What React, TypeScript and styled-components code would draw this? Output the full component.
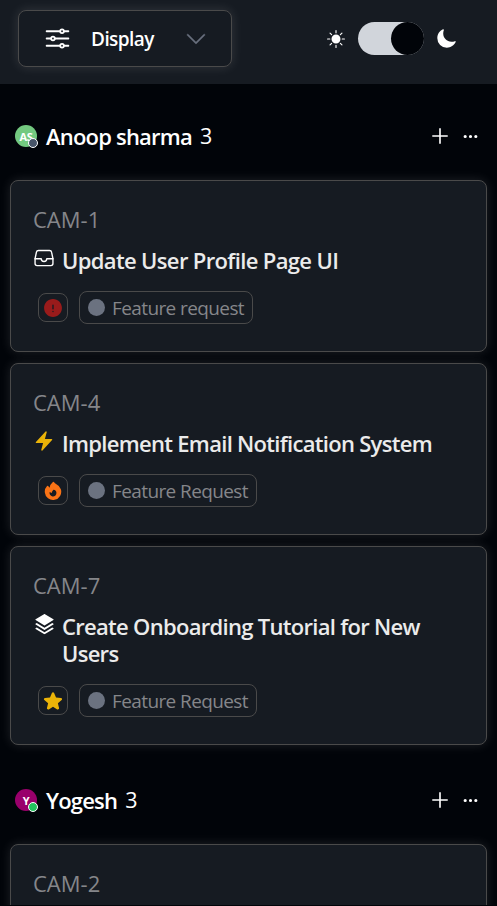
import React from "react";
import styled, { createGlobalStyle } from "styled-components";
import { IoOptionsOutline, IoMoon, IoFileTrayOutline } from "react-icons/io5";
import { BsSunFill, BsChevronDown, BsThreeDots } from "react-icons/bs";
import { AiOutlinePlus } from "react-icons/ai";
import { RiStackFill } from "react-icons/ri";
import { HiFire, HiBolt, HiStar, HiExclamationCircle } from "react-icons/hi2";

const GlobalStyle = createGlobalStyle`
  *, *::before, *::after { box-sizing: border-box; }
  html, body { margin: 0; background: #010409; overflow: hidden; }
  body { font-family: "Open Sans", "Noto Sans", sans-serif; color: #fff; }
  svg { display: block; flex: none; }
`;

const Screen = styled.div`
  width: 497px;
  height: 905px;
  overflow: hidden;
  background: #010409;
`;

const Header = styled.header`
  display: flex;
  align-items: flex-start;
  justify-content: space-between;
  height: 84px;
  padding: 10px 40px 0 18px;
  background: #161b22;
`;

const DisplayButton = styled.button`
  display: flex;
  align-items: center;
  width: 214px;
  height: 57px;
  padding: 0 24px 0 24px;
  border: 1px solid #4a4a4a;
  border-radius: 8px;
  background: #161b22;
  color: #fff;
  font: 600 19px/26px "Open Sans", sans-serif;
  letter-spacing: -0.55px;
  box-shadow: 0 0 12px rgba(255, 255, 255, 0.12);
`;

const DisplayLabel = styled.span`
  margin: 0 auto 0 19px;
`;

const Chevron = styled(BsChevronDown)`
  color: #6b7280;
  stroke: currentColor;
  stroke-width: 0.4px;
`;

const ThemeSwitch = styled.div`
  display: flex;
  align-items: center;
  margin-top: 12px;
`;

const Track = styled.div`
  display: flex;
  justify-content: flex-end;
  width: 66px;
  height: 33px;
  margin: 0 12px 0 13px;
  border-radius: 17px;
  background: #d1d5db;
`;

const Knob = styled.div`
  width: 33px;
  height: 33px;
  border-radius: 50%;
  background: #010409;
`;

const GroupHeader = styled.div<{ $height: number; $top: number }>`
  display: flex;
  align-items: center;
  height: ${(p) => p.$height}px;
  padding: ${(p) => p.$top}px 18px 0 15px;
`;

const Avatar = styled.div<{ $color: string }>`
  position: relative;
  display: flex;
  align-items: center;
  justify-content: center;
  width: 22px;
  height: 22px;
  margin: -2px 9px 0 0;
  border-radius: 50%;
  background: ${(p) => p.$color};
  font-size: 11px;
  font-weight: 700;
  letter-spacing: -0.3px;
`;

const Status = styled.span<{ $color: string }>`
  position: absolute;
  right: -1px;
  bottom: -1px;
  width: 10px;
  height: 10px;
  border: 1px solid #fff;
  border-radius: 50%;
  background: ${(p) => p.$color};
`;

const Name = styled.h2`
  margin: -2px 0 0;
  font-size: 22px;
  font-weight: 600;
  line-height: 28px;
  letter-spacing: -0.8px;
`;

const Count = styled.span`
  margin: -2px 0 0 8px;
  font-size: 21.5px;
  line-height: 28px;
`;

const Actions = styled.div`
  display: flex;
  align-items: center;
  gap: 11px;
  margin: -2px 0 0 auto;
`;

const Cards = styled.div`
  display: flex;
  flex-direction: column;
  gap: 11px;
  padding: 0 10px;
`;

const Card = styled.article`
  padding: 24px 22px 27px;
  border: 1px solid #4a4a4a;
  border-radius: 8px;
  background: #161b22;
  box-shadow: 0 0 12px rgba(255, 255, 255, 0.12);
`;

const TicketId = styled.div`
  color: #85868a;
  font-size: 22px;
  line-height: 28px;
`;

const TitleRow = styled.div`
  display: flex;
  align-items: flex-start;
  gap: 7px;
  margin-top: 14px;
`;

const TypeIcon = styled.span`
  display: flex;
  flex: none;
  align-items: center;
  justify-content: center;
  width: 22px;
  height: 22px;
`;

const Title = styled.h3<{ $spacing: number }>`
  margin: 0;
  color: #ebebeb;
  font-size: 22px;
  font-weight: 600;
  line-height: 27px;
  letter-spacing: ${(p) => p.$spacing}px;
`;

const Tags = styled.div`
  display: flex;
  align-items: center;
  gap: 11px;
  margin: 17px 0 0 5px;
`;

const PriorityBox = styled.span`
  display: flex;
  align-items: center;
  justify-content: center;
  width: 30px;
  height: 29px;
  border: 1px solid #4a4a4a;
  border-radius: 8px;
`;

const Tag = styled.span<{ $width: number }>`
  display: flex;
  align-items: center;
  gap: 7px;
  width: ${(p) => p.$width}px;
  height: 33px;
  padding-left: 8px;
  border: 1px solid #4a4a4a;
  border-radius: 8px;
  color: #85868a;
  font-size: 19px;
  letter-spacing: -0.6px;
  white-space: nowrap;
`;

const Dot = styled.span`
  flex: none;
  width: 17px;
  height: 17px;
  border-radius: 50%;
  background: #6b7280;
`;

type Ticket = {
  id: string;
  title: string;
  spacing: number;
  icon: React.ReactNode;
  priority: React.ReactNode;
  tag: string;
  tagWidth: number;
};

const tickets: Ticket[] = [
  {
    id: "CAM-1",
    title: "Update User Profile Page UI",
    spacing: -0.64,
    icon: <IoFileTrayOutline size={22} color="#fff" />,
    priority: <HiExclamationCircle size={22} color="#991b1b" />,
    tag: "Feature request",
    tagWidth: 174,
  },
  {
    id: "CAM-4",
    title: "Implement Email Notification System",
    spacing: -0.7,
    icon: <HiBolt size={22} color="#eab308" />,
    priority: <HiFire size={22} color="#f97316" />,
    tag: "Feature Request",
    tagWidth: 178,
  },
  {
    id: "CAM-7",
    title: "Create Onboarding Tutorial for New Users",
    spacing: -0.7,
    icon: <RiStackFill size={23} color="#fff" />,
    priority: <HiStar size={22} color="#eab308" />,
    tag: "Feature Request",
    tagWidth: 178,
  },
];

type GroupProps = {
  initials: string;
  color: string;
  status: string;
  name: string;
  height: number;
  top: number;
};

function Group({ initials, color, status, name, height, top }: GroupProps) {
  return (
    <GroupHeader $height={height} $top={top}>
      <Avatar $color={color}>
        {initials}
        <Status $color={status} />
      </Avatar>
      <Name>{name}</Name>
      <Count>3</Count>
      <Actions>
        <AiOutlinePlus size={22} color="#fff" />
        <BsThreeDots size={17} color="#fff" />
      </Actions>
    </GroupHeader>
  );
}

export default function App() {
  return (
    <Screen>
      <GlobalStyle />
      <Header>
        <DisplayButton>
          <IoOptionsOutline size={29} />
          <DisplayLabel>Display</DisplayLabel>
          <Chevron size={22} />
        </DisplayButton>
        <ThemeSwitch>
          <BsSunFill size={18} />
          <Track>
            <Knob />
          </Track>
          <IoMoon size={21} />
        </ThemeSwitch>
      </Header>
      <Group initials="AS" color="#73c980" status="#475569" name="Anoop sharma" height={96} top={10} />
      <Cards>
        {tickets.map((t) => (
          <Card key={t.id}>
            <TicketId>{t.id}</TicketId>
            <TitleRow>
              <TypeIcon>{t.icon}</TypeIcon>
              <Title $spacing={t.spacing}>{t.title}</Title>
            </TitleRow>
            <Tags>
              <PriorityBox>{t.priority}</PriorityBox>
              <Tag $width={t.tagWidth}>
                <Dot />
                {t.tag}
              </Tag>
            </Tags>
          </Card>
        ))}
      </Cards>
      <Group initials="Y" color="#99006b" status="#22c55e" name="Yogesh" height={99} top={13} />
      <Cards>
        <Card>
          <TicketId>CAM-2</TicketId>
          <TitleRow />
        </Card>
      </Cards>
    </Screen>
  );
}
